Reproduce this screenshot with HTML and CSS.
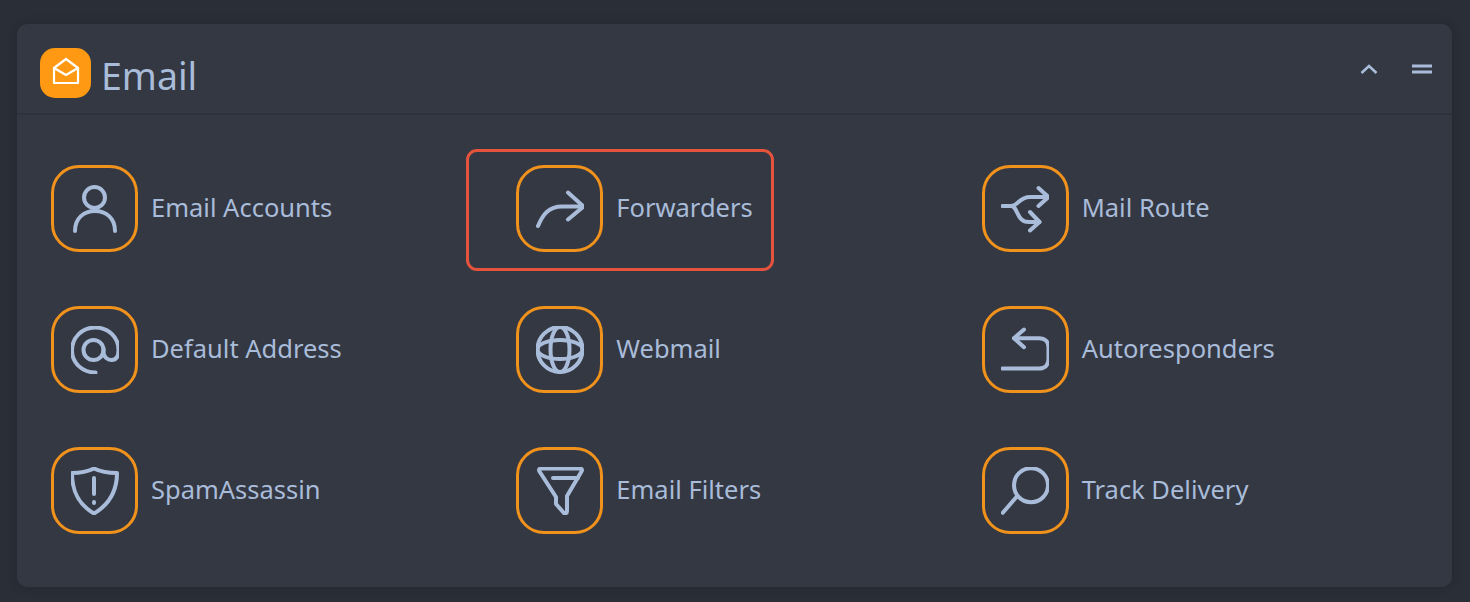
FILE: index.html
```html
<!DOCTYPE html>
<html lang="en">
<head>
  <meta charset="UTF-8" />
  <meta name="viewport" content="width=device-width, initial-scale=1.0"/>
  <title>Email</title>
  <link rel="stylesheet" href="styles.css">
</head>
<body>

  <section class="panel">
    <div class="panel-head">
      <div class="panel-logo">
        <svg viewBox="0 0 28 28" width="28" height="28" fill="none" stroke="#fff" stroke-width="2.200" stroke-linejoin="round" stroke-linecap="round">
          <path d="M2 11 14 2 26 11V26H2z"/>
          <path d="M2 11 14 18l12-7"/>
        </svg>
      </div>
      <h2>Email</h2>
      <div class="panel-tools">
        <svg viewBox="0 0 18 10" width="18" height="10" fill="none" stroke="#a9bcd9" stroke-width="2.600">
          <path d="M1.500 9 9 2l7.500 7"/>
        </svg>
        <svg viewBox="0 0 20 10" width="20" height="10" fill="none" stroke="#a9bcd9" stroke-width="2.800">
          <path d="M0 2h20M0 8h20"/>
        </svg>
      </div>
    </div>

    <div class="tools-grid">
      <a class="tool" href="#">
        <span class="tool-icon">
          <svg viewBox="0 0 48 48"><circle cx="23.500" cy="12.500" r="10.500"/><path d="M4 46C4 33 13 26 24 26s20 7 20 20"/></svg>
        </span>
        <span class="tool-label">Email Accounts</span>
      </a>
      <a class="tool highlighted" href="#">
        <span class="tool-icon">
          <svg viewBox="0 0 48 48"><path d="M2 41C7 29 13 21.500 26 21.500H47"/><path d="M32 7.500l15.500 14L32 34.500"/></svg>
        </span>
        <span class="tool-label">Forwarders</span>
      </a>
      <a class="tool" href="#">
        <span class="tool-icon">
          <svg viewBox="0 0 48 48"><path d="M1.500 21H10C17 21 18 12 29 12H47.500"/><path d="M37.500 3l10 9-10 9"/><path d="M10 21C17 21 15 37 28 37H38.500"/><path d="M29 27l9.500 10L29 45.500"/></svg>
        </span>
        <span class="tool-label">Mail Route</span>
      </a>
      <a class="tool" href="#">
        <span class="tool-icon">
          <svg viewBox="0 0 48 48"><circle cx="22.500" cy="24" r="10"/><path d="M32.500 23v3c0 5 4 8 8 8s7-3 7-10C47.500 10.500 37 1.500 24 1.500S1 11.500 1 24.500 12 46.500 24.500 46.500"/></svg>
        </span>
        <span class="tool-label">Default Address</span>
      </a>
      <a class="tool" href="#">
        <span class="tool-icon">
          <svg viewBox="0 0 48 48"><circle cx="24" cy="23.500" r="22.500"/><ellipse cx="24" cy="23.500" rx="9.500" ry="22.500"/><ellipse cx="24" cy="23.500" rx="22.500" ry="9.500"/></svg>
        </span>
        <span class="tool-label">Webmail</span>
      </a>
      <a class="tool" href="#">
        <span class="tool-icon">
          <svg viewBox="0 0 48 48"><path d="M23 3.500 13 12.200l10 9"/><path d="M13 12.200H38c6 0 9.500 3.500 9.500 9V33c0 6-3.500 9.500-9.500 9.500H1.500"/></svg>
        </span>
        <span class="tool-label">Autoresponders</span>
      </a>
      <a class="tool" href="#">
        <span class="tool-icon">
          <svg viewBox="0 0 48 48"><path d="M23 1.500C17 4.500 9 6 1 6 1 24 7 37 23 46.500 39 37 46 24 46 6 38 6 29 4.500 23 1.500z"/><path d="M23 11V27M23 35v1"/></svg>
        </span>
        <span class="tool-label">SpamAssassin</span>
      </a>
      <a class="tool" href="#">
        <span class="tool-icon">
          <svg viewBox="0 0 48 48"><path d="M5 1.500H44C46 1.500 46.500 3 45.500 4.500L31 29V44C31 46.500 29 47 27.500 45.500L20 37V30L3.500 4.500C2.500 3 3 1.500 5 1.500z"/><path d="M17 11H42"/></svg>
        </span>
        <span class="tool-label">Email Filters</span>
      </a>
      <a class="tool" href="#">
        <span class="tool-icon">
          <svg viewBox="0 0 48 48"><circle cx="30" cy="18.200" r="17"/><path d="M15.200 30.200 1.800 45.800"/></svg>
        </span>
        <span class="tool-label">Track Delivery</span>
      </a>
    </div>
  </section>

</body>
</html>
```

FILE: styles.css
```css
* {
  box-sizing: border-box;
  margin: 0;
  padding: 0;
  font-family: 'Noto Sans', sans-serif;
}

body {
  background-color: #2a2e37;
  padding: 24px 18px 15px 17px;
  height: 602px;
  overflow: hidden;
}

.panel {
  background-color: #343843;
  border-radius: 10px;
  height: 563px;
  box-shadow: 0 0 10px rgba(20, 22, 28, 0.25);
}

.panel-head {
  display: flex;
  align-items: center;
  height: 91px;
  padding: 9px 20px 0 23px;
  border-bottom: 2px solid #2e323c;
}

.panel-logo {
  flex: none;
  width: 51px;
  height: 50px;
  background-color: #ff9914;
  border-radius: 15px;
  display: flex;
  justify-content: center;
  align-items: center;
  padding-bottom: 4px;
}

.panel-head h2 {
  margin-left: 10px;
  font-size: 37.500px;
  font-weight: 400;
  color: #a9bcd9;
  line-height: 1;
  margin-top: 6px;
}

.panel-tools {
  margin-left: auto;
  display: flex;
  align-items: center;
  gap: 34px;
  margin-bottom: 9px;
}

.tools-grid {
  display: grid;
  grid-template-columns: repeat(3, 465.330px);
  grid-auto-rows: 141px;
  padding: 50px 0 0 34px;
}

.tool {
  position: relative;
  display: flex;
  align-items: center;
  gap: 13px;
  height: 87px;
  font-size: 25.500px;
  color: #a9bcd9;
  text-decoration: none;
}

.tool-label {
  margin-bottom: 3px;
}

.tool-icon {
  flex: none;
  width: 87px;
  height: 87px;
  border: 3px solid #f0921c;
  border-radius: 28px;
  display: flex;
  justify-content: center;
  align-items: center;
}

.tool-icon svg {
  flex: none;
  width: 48px;
  height: 48px;
  fill: none;
  stroke: #a9bcd9;
  stroke-width: 4;
  stroke-linecap: round;
  stroke-linejoin: round;
}

.highlighted::after {
  content: "";
  box-sizing: border-box;
  position: absolute;
  left: -50px;
  top: -16px;
  width: 308px;
  height: 122px;
  border: 3px solid #e5533d;
  border-radius: 11px;
}
```
